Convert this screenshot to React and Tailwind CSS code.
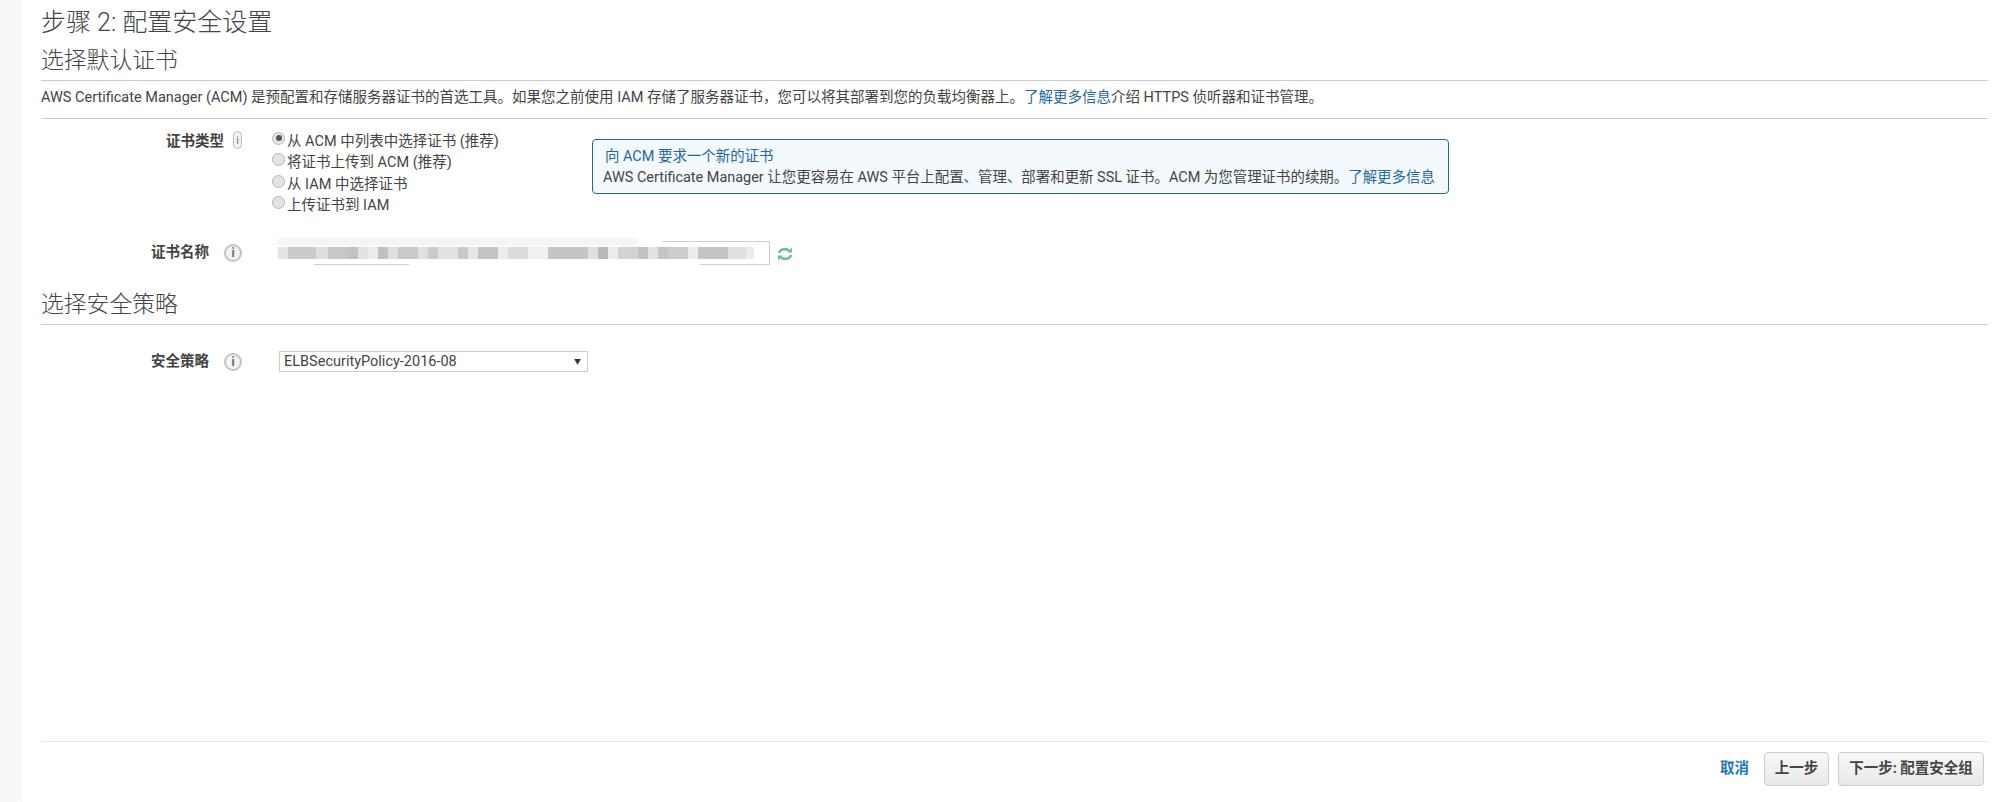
import React from "react";

const font = { fontFamily: 'Roboto, "Noto Sans CJK SC", sans-serif' };

function Info({ narrow }) {
  return (
    <span
      className={
        narrow
          ? "flex h-[18px] w-[9px] items-center justify-center rounded-full border border-[#bbb] bg-[#f4f4f4] text-[11px] leading-none text-[#777]"
          : "flex h-[18px] w-[18px] items-center justify-center rounded-full border-2 border-[#c4c4c4] bg-[#f4f4f4] text-[12px] font-bold leading-none text-[#666]"
      }
    >
      i
    </span>
  );
}

function Radio({ checked, children }) {
  return (
    <div className="flex h-[21.5px] items-center">
      <span className="-mt-[5px] mr-[2px] flex h-[13px] w-[13px] items-center justify-center rounded-full border border-[#b5b5b5] bg-[#e4e4e4]">
        {checked && <span className="h-[6px] w-[6px] rounded-full bg-[#555]" />}
      </span>
      <span className="pt-[2px]">{children}</span>
    </div>
  );
}

const blocks = [
  [10, "#e4e4e4"], [28, "#cbcbcb"], [12, "#dedede"], [20, "#c8c8c8"], [10, "#c2c2c2"], [10, "#e2e2e2"],
  [10, "#ececec"], [10, "#c0c0c0"], [10, "#dfdfdf"], [20, "#cacaca"], [10, "#e0e0e0"], [10, "#cbcbcb"],
  [20, "#e2e2e2"], [10, "#c8c8c8"], [10, "#e6e6e6"], [20, "#c4c4c4"], [10, "#ececec"], [20, "#dcdcdc"],
  [20, "#f0f0f0"], [40, "#c5c5c5"], [10, "#dfdfdf"], [10, "#bababa"], [10, "#ececec"], [20, "#d2d2d2"],
  [10, "#c2c2c2"], [10, "#e2e2e2"], [10, "#c4c4c4"], [20, "#cccccc"], [10, "#ececec"], [30, "#c4c4c4"],
  [18, "#e0e0e0"], [8, "#ececec"],
];

export default function App() {
  return (
    <div className="flex h-[802px] w-full bg-white text-[14.5px] text-[#444]" style={font}>
      <div className="w-[21px] shrink-0 bg-gradient-to-r from-[#f6f6f6] to-[#fafafa] shadow-[1px_0_2px_rgba(0,0,0,0.05)]" />
      <main className="flex min-w-0 flex-1 flex-col pl-5 pr-3">
        <h1 className="mt-[6px] text-[25px] font-light leading-[34px] text-[#444]">步骤 2: 配置安全设置</h1>
        <h2 className="mt-[4px] border-b border-[#ccc] pb-[2px] text-[22.8px] font-light leading-[34px] text-[#444]">选择默认证书</h2>
        <p className="border-b border-[#ccc] pb-[10px] pt-[6px] leading-[21px]">
          AWS Certificate Manager (ACM) 是预配置和存储服务器证书的首选工具。如果您之前使用 IAM 存储了服务器证书，您可以将其部署到您的负载均衡器上。
          <a className="text-[#1f6a9a]">了解更多信息</a>介绍 HTTPS 侦听器和证书管理。
        </p>

        <div className="mt-[11px] flex">
          <div className="flex w-[231px] shrink-0 items-start">
            <div className="flex h-[21.5px] w-[183px] items-center justify-end pt-[3px] font-bold">证书类型</div>
            <div className="ml-[9px] mt-[1px]"><Info narrow /></div>
          </div>
          <div className="w-[320px] shrink-0">
            <Radio checked>从 ACM 中列表中选择证书 (推荐)</Radio>
            <Radio>将证书上传到 ACM (推荐)</Radio>
            <Radio>从 IAM 中选择证书</Radio>
            <Radio>上传证书到 IAM</Radio>
          </div>
          <div className="mt-[9px] h-[55px] w-[857px] rounded-[4px] border border-[#1f6a9a] bg-[#f3f9fd] px-[10px] pt-[6px] text-[14.45px] leading-[21px]">
            <div className="pl-[2px] text-[#1f6a9a]">向 ACM 要求一个新的证书</div>
            <div className="whitespace-nowrap">
              AWS Certificate Manager 让您更容易在 AWS 平台上配置、管理、部署和更新 SSL 证书。ACM 为您管理证书的续期。<a className="text-[#1f6a9a]">了解更多信息</a>
            </div>
          </div>
        </div>

        <div className="mt-[25px] flex items-center">
          <div className="flex w-[237px] shrink-0 items-center">
            <div className="w-[168px] text-right font-bold">证书名称</div>
            <div className="ml-[15px]"><Info /></div>
          </div>
          <div className="relative h-[24px] w-[492px]">
            <div className="absolute -top-[3px] left-0 h-[8px] w-[360px] bg-[#f4f4f4] blur-[1px]" />
            <div className="absolute right-0 top-0 h-[1px] w-[108px] bg-[#cfcfcf]" />
            <div className="absolute bottom-0 right-0 h-[1px] w-[70px] bg-[#cfcfcf]" />
            <div className="absolute bottom-0 left-[36px] h-[1px] w-[95px] bg-[#cfcfcf]" />
            <div className="absolute bottom-0 right-0 top-0 w-[1px] bg-[#cfcfcf]" />
            <div className="absolute left-0 top-[6px] flex h-[12px] blur-[0.7px]">
              {blocks.map(([w, c], i) => (
                <span key={i} className="h-full" style={{ width: w, backgroundColor: c }} />
              ))}
            </div>
          </div>
          <svg className="ml-[7px] mt-[2px]" width="16" height="16" viewBox="0 0 16 16" fill="none" stroke="#6cc08f" strokeWidth="2.6">
            <path d="M2 7a6 5 0 0 1 10-2.5" />
            <path d="M14 9a6 5 0 0 1-10 2.5" />
            <path d="M15 1.5v5h-5z" fill="#6cc08f" stroke="none" />
            <path d="M1 14.5v-5h5z" fill="#6cc08f" stroke="none" />
          </svg>
        </div>

        <h2 className="mt-[23px] border-b border-[#ccc] pb-[2px] text-[22.8px] font-light leading-[34px] text-[#444]">选择安全策略</h2>

        <div className="mt-[26px] flex items-center">
          <div className="flex w-[238px] shrink-0 items-center">
            <div className="w-[168px] text-right font-bold">安全策略</div>
            <div className="ml-[15px]"><Info /></div>
          </div>
          <div className="flex h-[21px] w-[309px] items-center justify-between border border-[#ccc] pl-[4px] pr-[6px]">
            <span>ELBSecurityPolicy-2016-08</span>
            <span className="text-[7px] text-[#333]">▼</span>
          </div>
        </div>

        <div className="mt-auto flex h-[61px] items-start justify-end border-t border-[#e8e8e8] pr-[4px] pt-[10px]">
          <a className="mr-[15px] flex h-[34px] items-center font-bold text-[#1f78b8]">取消</a>
          <button className="mr-[9px] h-[34px] w-[65px] rounded-[4px] border border-[#ccc] bg-gradient-to-b from-[#f7f7f7] to-[#e9e9e9] font-bold text-[#444]">上一步</button>
          <button className="h-[34px] w-[146px] rounded-[4px] border border-[#ccc] bg-gradient-to-b from-[#f7f7f7] to-[#e9e9e9] font-bold text-[#444]">下一步: 配置安全组</button>
        </div>
      </main>
    </div>
  );
}
